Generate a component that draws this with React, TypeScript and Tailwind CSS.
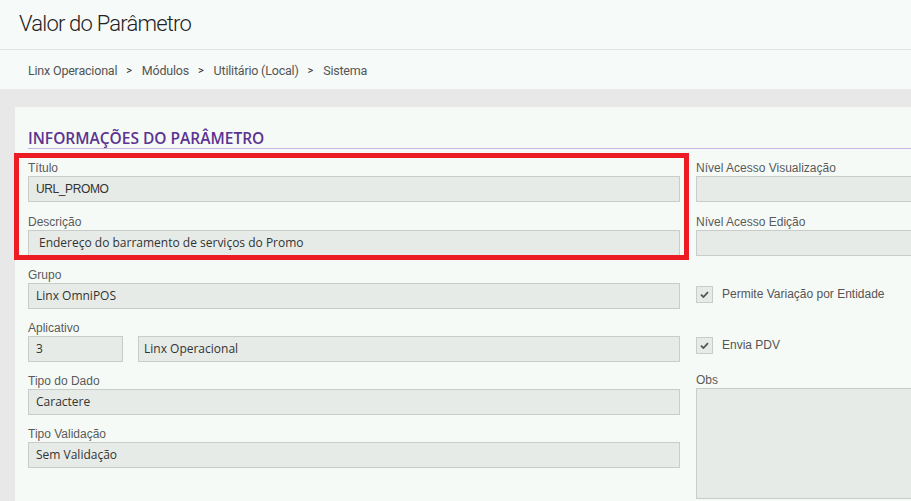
import React from "react";

function Field({
  label,
  children,
  className = "",
}: {
  label: string;
  children: React.ReactNode;
  className?: string;
}) {
  return (
    <div className={"flex flex-col " + className}>
      <div className="h-[15px] text-[12px] leading-[15px] text-[#5a5a5a] font-['Liberation_Sans',Arial,sans-serif]">
        {label}
      </div>
      {children}
    </div>
  );
}

function Input({
  value,
  className = "",
  pad = "pl-[7px]",
  arialFont = false,
}: {
  value?: string;
  className?: string;
  pad?: string;
  arialFont?: boolean;
}) {
  return (
    <div
      className={
        "h-[26px] border border-[#c9cdc9] bg-[#e6ebe7] flex items-center text-[#333] " +
        pad +
        " " +
        (arialFont
          ? "text-[12px] tracking-[-0.4px] font-['Liberation_Sans',Arial,sans-serif]"
          : "text-[12px] font-['Open_Sans',sans-serif]") +
        " " +
        className
      }
    >
      {value}
    </div>
  );
}

function Check({ label }: { label: string }) {
  return (
    <div className="flex items-center h-[16px]">
      <div className="w-[17px] h-[17px] shrink-0 border border-[#c9cdc9] bg-[#e6ebe7] flex items-center justify-center">
        <svg width="9" height="7" viewBox="0 0 9 7">
          <path d="M1 3.6 L3.4 6 L8 1.2" stroke="#555" strokeWidth="1.8" fill="none" />
        </svg>
      </div>
      <span className="ml-[9px] text-[12px] text-[#555] font-['Liberation_Sans',Arial,sans-serif]">
        {label}
      </span>
    </div>
  );
}

function Sep() {
  return <span className="ml-[9px] mr-[10px] text-[11px] text-[#222]">&gt;</span>;
}

export default function App() {
  return (
    <div className="w-[911px] h-[501px] overflow-hidden bg-[#e8e8e8] relative">
      <div className="bg-[#f6faf8]">
        <div className="h-[50px] border-b border-[#e2e6e3] flex items-center pl-[19px]">
          <h1 className="text-[22px] font-light tracking-[-0.8px] text-[#222] font-['Roboto',sans-serif] leading-none mt-[-2px]">
            Valor do Parâmetro
          </h1>
        </div>
        <div className="h-[39px] flex items-center pt-[3px] pl-[28px] text-[12.5px] text-[#555] font-['Roboto',sans-serif] tracking-[-0.2px]">
          <span>Linx Operacional</span>
          <Sep />
          <span>Módulos</span>
          <Sep />
          <span>Utilitário (Local)</span>
          <Sep />
          <span>Sistema</span>
        </div>
      </div>

      <div className="pt-[18px] pl-[15px]">
        <div className="bg-[#f6faf7] pl-[13px] h-[420px]">
          <div className="pt-[22px] border-b border-[#c4b6de] h-[42px]">
            <h2 className="text-[15.5px] font-semibold text-[#5b3390] leading-[19px] font-['Open_Sans',sans-serif]">
              INFORMAÇÕES DO PARÂMETRO
            </h2>
          </div>

          <div className="flex gap-[16px] pt-[12px]">
            <div className="w-[652px] shrink-0 flex flex-col">
              <Field label="Título">
                <Input value="URL_PROMO" arialFont />
              </Field>
              <Field label="Descrição" className="mt-[13px]">
                <Input value="Endereço do barramento de serviços do Promo" pad="pl-[10px]" />
              </Field>
              <Field label="Grupo" className="mt-[12px]">
                <Input value="Linx OmniPOS" />
              </Field>
              <Field label="Aplicativo" className="mt-[12px]">
                <div className="flex gap-[15px]">
                  <Input value="3" className="w-[95px] shrink-0" />
                  <Input value="Linx Operacional" className="flex-1" pad="pl-[5px]" />
                </div>
              </Field>
              <Field label="Tipo do Dado" className="mt-[12px]">
                <Input value="Caractere" />
              </Field>
              <Field label="Tipo Validação" className="mt-[12px]">
                <Input value="Sem Validação" />
              </Field>
            </div>

            <div className="w-[400px] shrink-0 flex flex-col">
              <Field label="Nível Acesso Visualização">
                <Input />
              </Field>
              <Field label="Nível Acesso Edição" className="mt-[13px]">
                <Input />
              </Field>
              <div className="mt-[30px]">
                <Check label="Permite Variação por Entidade" />
              </div>
              <div className="mt-[35px]">
                <Check label="Envia PDV" />
              </div>
              <Field label="Obs" className="mt-[20px]">
                <div className="h-[111px] border border-[#c9cdc9] bg-[#e6ebe7]" />
              </Field>
            </div>
          </div>
        </div>
      </div>

      <div className="absolute left-[14px] top-[153px] w-[675px] h-[107px] border-[5px] border-[#ed1c24] pointer-events-none" />
    </div>
  );
}
